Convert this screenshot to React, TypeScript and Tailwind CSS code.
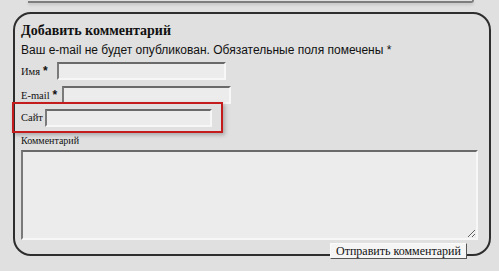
const inputCls =
  "h-[18px] border-2 border-t-[#6a6a6a] border-l-[#7a7a7a] border-r-[#f7f7f7] border-b-[#f7f7f7] bg-[#ececec] outline-none";

const Star = () => (
  <span className="ml-[3px] font-['Liberation_Sans',sans-serif] text-[12px] font-bold">*</span>
);

const App = () => {
  return (
    <div className="h-[271px] w-[499px] overflow-hidden bg-[#e0e0e0] font-['Liberation_Serif',serif] text-[#111]">
      <div className="ml-[28px] h-[3px] w-[446px] rounded-br-[6px] border-b-2 border-r-2 border-[#7d7d7d] shadow-[0_2px_3px_rgba(0,0,0,0.12)]" />
      <div className="ml-[13px] mt-[9px] h-[244px] w-[478px] rounded-[18px] border-2 border-[#2e2e2e] px-[6px] pt-[9px]">
        <h3 className="text-[14px] font-bold leading-[16px]">Добавить комментарий</h3>
        <p className="mt-[4px] font-['Liberation_Sans',sans-serif] text-[12px] leading-[14px]">
          Ваш e-mail не будет опубликован. Обязательные поля помечены *
        </p>
        <form className="flex flex-col">
          <div className="mt-[5px] flex items-center">
            <label className="w-[36px] text-[10.5px] leading-[12px]">
              Имя<Star />
            </label>
            <input className={`${inputCls} w-[169px]`} />
          </div>
          <div className="mt-[6px] flex items-center">
            <label className="w-[41px] text-[10.5px] leading-[12px]">
              E-mail<Star />
            </label>
            <input className={`${inputCls} w-[169px]`} />
          </div>
          <div className="-ml-[9px] -mt-[2px] flex h-[31px] w-[211px] items-center border-2 border-[#c41c1c] pl-[7px] shadow-[2px_2px_4px_rgba(0,0,0,0.25)]">
            <label className="w-[24px] text-[10.5px] leading-[12px]">Сайт</label>
            <input className={`${inputCls} w-[167px]`} />
          </div>
          <label className="mt-[2px] text-[10px] leading-[12px]">Комментарий</label>
          <textarea className="mt-[3px] h-[90px] w-[457px] border-2 border-t-[#6a6a6a] border-l-[#7a7a7a] border-r-[#f7f7f7] border-b-[#f7f7f7] bg-[#ececec] outline-none" />
          <button
            type="button"
            className="relative ml-[309px] mt-[3px] h-[16px] w-[137px] whitespace-nowrap border border-t-[#fafafa] border-l-[#fafafa] border-r-[#555] border-b-[#555] bg-[#f5f5f5] p-0 text-[12px] leading-[13px]"
          >
            Отправить комментарий
          </button>
        </form>
      </div>
    </div>
  );
};

export default App;
